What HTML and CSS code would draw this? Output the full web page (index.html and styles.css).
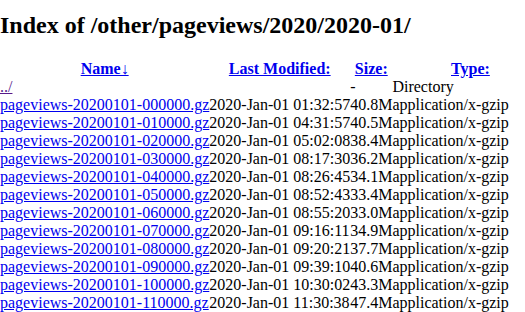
FILE: index.html
```html
<!DOCTYPE html>
<html>
<head>
<meta charset="utf-8">
<title>Index of /other/pageviews/2020/2020-01/</title>
<link rel="stylesheet" href="styles.css">
</head>
<body>
<h2 class="title">Index of /other/pageviews/2020/2020-01/</h2>
<div class="list">
<table class="listing" cellpadding="0" cellspacing="0">
<thead>
<tr><th class="n"><a href="#" class="link">Name↓</a></th><th class="m"><a href="#" class="link">Last Modified:</a></th><th class="s"><a href="#" class="link">Size:</a></th><th class="t"><a href="#" class="link">Type:</a></th></tr>
</thead>
<tbody>
<tr><td class="n"><a href="#" class="link visited">../</a></td><td class="m">&nbsp;</td><td class="s">-&nbsp;&nbsp;</td><td class="t">Directory</td></tr>
<tr><td class="n"><a href="#" class="link">pageviews-20200101-000000.gz</a></td><td class="m">2020-Jan-01 01:32:57</td><td class="s">40.8M</td><td class="t">application/x-gzip</td></tr>
<tr><td class="n"><a href="#" class="link">pageviews-20200101-010000.gz</a></td><td class="m">2020-Jan-01 04:31:57</td><td class="s">40.5M</td><td class="t">application/x-gzip</td></tr>
<tr><td class="n"><a href="#" class="link">pageviews-20200101-020000.gz</a></td><td class="m">2020-Jan-01 05:02:08</td><td class="s">38.4M</td><td class="t">application/x-gzip</td></tr>
<tr><td class="n"><a href="#" class="link">pageviews-20200101-030000.gz</a></td><td class="m">2020-Jan-01 08:17:30</td><td class="s">36.2M</td><td class="t">application/x-gzip</td></tr>
<tr><td class="n"><a href="#" class="link">pageviews-20200101-040000.gz</a></td><td class="m">2020-Jan-01 08:26:45</td><td class="s">34.1M</td><td class="t">application/x-gzip</td></tr>
<tr><td class="n"><a href="#" class="link">pageviews-20200101-050000.gz</a></td><td class="m">2020-Jan-01 08:52:43</td><td class="s">33.4M</td><td class="t">application/x-gzip</td></tr>
<tr><td class="n"><a href="#" class="link">pageviews-20200101-060000.gz</a></td><td class="m">2020-Jan-01 08:55:20</td><td class="s">33.0M</td><td class="t">application/x-gzip</td></tr>
<tr><td class="n"><a href="#" class="link">pageviews-20200101-070000.gz</a></td><td class="m">2020-Jan-01 09:16:11</td><td class="s">34.9M</td><td class="t">application/x-gzip</td></tr>
<tr><td class="n"><a href="#" class="link">pageviews-20200101-080000.gz</a></td><td class="m">2020-Jan-01 09:20:21</td><td class="s">37.7M</td><td class="t">application/x-gzip</td></tr>
<tr><td class="n"><a href="#" class="link">pageviews-20200101-090000.gz</a></td><td class="m">2020-Jan-01 09:39:10</td><td class="s">40.6M</td><td class="t">application/x-gzip</td></tr>
<tr><td class="n"><a href="#" class="link">pageviews-20200101-100000.gz</a></td><td class="m">2020-Jan-01 10:30:02</td><td class="s">43.3M</td><td class="t">application/x-gzip</td></tr>
<tr><td class="n"><a href="#" class="link">pageviews-20200101-110000.gz</a></td><td class="m">2020-Jan-01 11:30:38</td><td class="s">47.4M</td><td class="t">application/x-gzip</td></tr>
</tbody>
</table>
</div>
</body>
</html>
```

FILE: styles.css
```css
html, body {
  background: #ffffff;
}
body {
  margin: 0;
  font-family: "Liberation Serif", "Times New Roman", serif;
  font-size: 16px;
  color: #000000;
}
.title {
  font-size: 24px;
  font-weight: bold;
  margin: 12px 0 21px 0;
}
.listing {
  border-collapse: collapse;
  border-spacing: 0;
}
.listing th,
.listing td {
  padding: 0;
  white-space: nowrap;
  line-height: 18px;
}
.listing th {
  font-weight: bold;
  text-align: center;
}
.listing td {
  text-align: left;
}
.listing th.t {
  min-width: 156px;
}
.link {
  color: #0000ee;
  text-decoration: underline;
}
.link.visited {
  color: #551a8b;
}
```
